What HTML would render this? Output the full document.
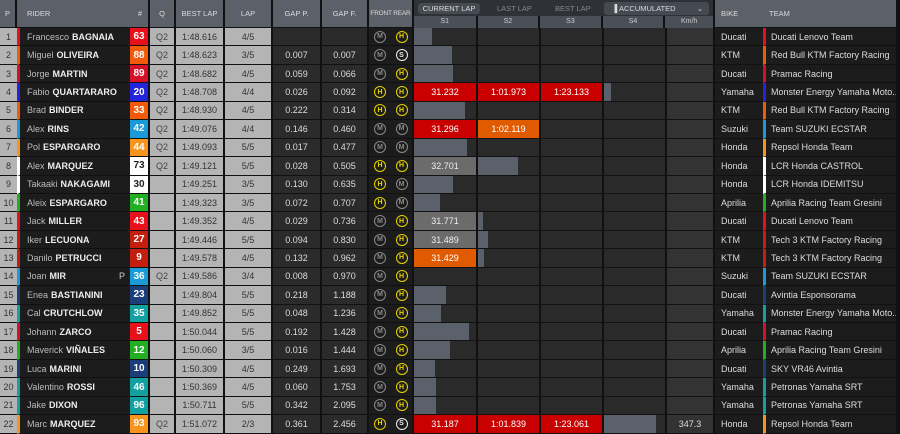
<!DOCTYPE html><html><head><meta charset="utf-8"><style>
*{margin:0;padding:0;box-sizing:border-box}
body{width:900px;height:434px;background:#111;font-family:"Liberation Sans",sans-serif;font-size:9px;overflow:hidden;color:#ddd}
.r{display:flex;height:18.45px}
.r>div{border-right:2px solid #111;border-bottom:1px solid #111;height:100%;display:flex;align-items:center;justify-content:center;position:relative;white-space:nowrap;overflow:hidden}
.p{width:17px;background:#b4b4b4;color:#333;border-right-width:0!important}
.rd{width:113px;background:#1c1c1c;color:#bbb;justify-content:flex-start!important;padding-left:7px;border-right:none!important;border-left:3px solid}
.rd b{color:#eee;margin-left:3px}
.n{width:20px;color:#fff;font-weight:bold;font-size:10px}
.q{width:26px;background:#b4b4b4;color:#444}
.bl{width:49px;background:#b4b4b4;color:#333}
.lp{width:48px;background:#b4b4b4;color:#333}
.gp{width:49px;background:#2b2b2b}
.gf{width:47px;background:#2b2b2b}
.fr{width:22px;background:#1c1c1c;border-right:none!important}
.rr{width:23px;background:#1c1c1c}
.s{background:#2a2a2a;justify-content:flex-start!important}
.s1{width:64px}.s2,.s3,.s4{width:63px}
.kh{width:48px;background:#333}
.bk{width:48px;background:#1c1c1c;justify-content:flex-start!important;padding-left:6px;border-right:none!important}
.tm{width:135px;background:#1c1c1c;justify-content:flex-start!important;padding-left:5px;border-left:3px solid}
.bar{position:absolute;left:0;top:0;bottom:0;background:#5b616b}
.red{background:#c80000!important;color:#fff;justify-content:center!important}
.org{background:#e05a00!important;color:#fff;justify-content:center!important}
.gry{background:#6b6b6b!important;color:#eee;justify-content:center!important}
.c{width:12px;height:12px;border-radius:50%;border:1.5px solid;font-size:7px;font-weight:bold;display:flex;align-items:center;justify-content:center}
.M{color:#8a8a8a;border-color:#8a8a8a}.H{color:#e8d400;border-color:#e8d400}.S{color:#eee;border-color:#eee}
.hd{display:flex;height:28px}
.hd>div{background:#5b6069;border-right:2px solid #111;border-bottom:1px solid #111;font-size:7.5px;color:#ddd;display:flex;align-items:center;justify-content:center;white-space:nowrap}
.sub>div{background:#4b5058;border-right:2px solid #111;text-align:center;line-height:12px}
</style></head><body>
<div class="hd">
<div style="width:17px">P</div>
<div style="width:133px;justify-content:space-between;padding:0 6px 0 10px"><span>RIDER</span><span>#</span></div>
<div style="width:26px">Q</div>
<div style="width:49px">BEST LAP</div>
<div style="width:48px">LAP</div>
<div style="width:49px">GAP P.</div>
<div style="width:47px">GAP F.</div>
<div style="width:45px;font-size:6.5px;letter-spacing:-0.2px">FRONT REAR</div>
<div style="width:301px;display:block;background:#2e3136;border-right:2px solid #111;padding:0">
 <div style="height:16px;position:relative;font-size:7.5px">
  <div style="position:absolute;left:4px;top:3px;width:62px;height:11px;background:#454a52;border-radius:3px;color:#ddd;text-align:center;line-height:11px">CURRENT LAP</div>
  <div style="position:absolute;left:83px;top:3px;color:#888;line-height:11px">LAST LAP</div>
  <div style="position:absolute;left:141px;top:3px;color:#888;line-height:11px">BEST LAP</div>
  <div style="position:absolute;left:190px;top:2px;width:105px;height:13px;background:#454a52;border-radius:3px;color:#ddd;line-height:13px;padding-left:8px">▐ ACCUMULATED<span style="position:absolute;right:6px">⌄</span></div>
 </div>
 <div class="sub" style="height:12px;display:flex;font-size:7px;color:#ccc;background:#111">
  <div style="width:64px">S1</div>
  <div style="width:63px">S2</div>
  <div style="width:63px">S3</div>
  <div style="width:63px">S4</div>
  <div style="width:48px;border-right:none">Km/h</div>
 </div>
</div>
<div style="width:48px;justify-content:flex-start;padding-left:6px;border-right:none">BIKE</div>
<div style="width:135px;justify-content:flex-start;padding-left:6px">TEAM</div>
</div>

<div class="r"><div class="p">1</div><div class="rd" style="border-left-color:#e8101a">Francesco<b>BAGNAIA</b></div><div class="n" style="background:#e8101a">63</div><div class="q">Q2</div><div class="bl">1:48.616</div><div class="lp">4/5</div><div class="gp"></div><div class="gf"></div><div class="fr"><span class="c M">M</span></div><div class="rr"><span class="c H">H</span></div><div class="s s1"><i class="bar" style="width:18px"></i></div><div class="s s2"></div><div class="s s3"></div><div class="s s4"></div><div class="kh"></div><div class="bk">Ducati</div><div class="tm" style="border-left-color:#e8101a">Ducati Lenovo Team</div></div>
<div class="r"><div class="p">2</div><div class="rd" style="border-left-color:#f05a0a">Miguel<b>OLIVEIRA</b></div><div class="n" style="background:#f05a0a">88</div><div class="q">Q2</div><div class="bl">1:48.623</div><div class="lp">3/5</div><div class="gp">0.007</div><div class="gf">0.007</div><div class="fr"><span class="c M">M</span></div><div class="rr"><span class="c S">S</span></div><div class="s s1"><i class="bar" style="width:38px"></i></div><div class="s s2"></div><div class="s s3"></div><div class="s s4"></div><div class="kh"></div><div class="bk">KTM</div><div class="tm" style="border-left-color:#f05a0a">Red Bull KTM Factory Racing</div></div>
<div class="r"><div class="p">3</div><div class="rd" style="border-left-color:#d4102a">Jorge<b>MARTIN</b></div><div class="n" style="background:#d4102a">89</div><div class="q">Q2</div><div class="bl">1:48.682</div><div class="lp">4/5</div><div class="gp">0.059</div><div class="gf">0.066</div><div class="fr"><span class="c M">M</span></div><div class="rr"><span class="c H">H</span></div><div class="s s1"><i class="bar" style="width:39px"></i></div><div class="s s2"></div><div class="s s3"></div><div class="s s4"></div><div class="kh"></div><div class="bk">Ducati</div><div class="tm" style="border-left-color:#d4102a">Pramac Racing</div></div>
<div class="r"><div class="p">4</div><div class="rd" style="border-left-color:#2424d8">Fabio<b>QUARTARARO</b></div><div class="n" style="background:#2424d8">20</div><div class="q">Q2</div><div class="bl">1:48.708</div><div class="lp">4/4</div><div class="gp">0.026</div><div class="gf">0.092</div><div class="fr"><span class="c H">H</span></div><div class="rr"><span class="c H">H</span></div><div class="s s1 red">31.232</div><div class="s s2 red">1:01.973</div><div class="s s3 red">1:23.133</div><div class="s s4"><i class="bar" style="width:7px"></i></div><div class="kh"></div><div class="bk">Yamaha</div><div class="tm" style="border-left-color:#2424d8">Monster Energy Yamaha Moto...</div></div>
<div class="r"><div class="p">5</div><div class="rd" style="border-left-color:#f05a0a">Brad<b>BINDER</b></div><div class="n" style="background:#f05a0a">33</div><div class="q">Q2</div><div class="bl">1:48.930</div><div class="lp">4/5</div><div class="gp">0.222</div><div class="gf">0.314</div><div class="fr"><span class="c H">H</span></div><div class="rr"><span class="c H">H</span></div><div class="s s1"><i class="bar" style="width:51px"></i></div><div class="s s2"></div><div class="s s3"></div><div class="s s4"></div><div class="kh"></div><div class="bk">KTM</div><div class="tm" style="border-left-color:#f05a0a">Red Bull KTM Factory Racing</div></div>
<div class="r"><div class="p">6</div><div class="rd" style="border-left-color:#1a9ad6">Alex<b>RINS</b></div><div class="n" style="background:#1a9ad6">42</div><div class="q">Q2</div><div class="bl">1:49.076</div><div class="lp">4/4</div><div class="gp">0.146</div><div class="gf">0.460</div><div class="fr"><span class="c M">M</span></div><div class="rr"><span class="c M">M</span></div><div class="s s1 red">31.296</div><div class="s s2 org">1:02.119</div><div class="s s3"></div><div class="s s4"></div><div class="kh"></div><div class="bk">Suzuki</div><div class="tm" style="border-left-color:#1a9ad6">Team SUZUKI ECSTAR</div></div>
<div class="r"><div class="p">7</div><div class="rd" style="border-left-color:#f7941d">Pol<b>ESPARGARO</b></div><div class="n" style="background:#f7941d">44</div><div class="q">Q2</div><div class="bl">1:49.093</div><div class="lp">5/5</div><div class="gp">0.017</div><div class="gf">0.477</div><div class="fr"><span class="c M">M</span></div><div class="rr"><span class="c M">M</span></div><div class="s s1"><i class="bar" style="width:53px"></i></div><div class="s s2"></div><div class="s s3"></div><div class="s s4"></div><div class="kh"></div><div class="bk">Honda</div><div class="tm" style="border-left-color:#f7941d">Repsol Honda Team</div></div>
<div class="r"><div class="p">8</div><div class="rd" style="border-left-color:#fff">Alex<b>MARQUEZ</b></div><div class="n" style="background:#fff;color:#222">73</div><div class="q">Q2</div><div class="bl">1:49.121</div><div class="lp">5/5</div><div class="gp">0.028</div><div class="gf">0.505</div><div class="fr"><span class="c H">H</span></div><div class="rr"><span class="c H">H</span></div><div class="s s1 gry">32.701</div><div class="s s2"><i class="bar" style="width:40px"></i></div><div class="s s3"></div><div class="s s4"></div><div class="kh"></div><div class="bk">Honda</div><div class="tm" style="border-left-color:#fff">LCR Honda CASTROL</div></div>
<div class="r"><div class="p">9</div><div class="rd" style="border-left-color:#fff">Takaaki<b>NAKAGAMI</b></div><div class="n" style="background:#fff;color:#222">30</div><div class="q"></div><div class="bl">1:49.251</div><div class="lp">3/5</div><div class="gp">0.130</div><div class="gf">0.635</div><div class="fr"><span class="c H">H</span></div><div class="rr"><span class="c M">M</span></div><div class="s s1"><i class="bar" style="width:39px"></i></div><div class="s s2"></div><div class="s s3"></div><div class="s s4"></div><div class="kh"></div><div class="bk">Honda</div><div class="tm" style="border-left-color:#fff">LCR Honda IDEMITSU</div></div>
<div class="r"><div class="p">10</div><div class="rd" style="border-left-color:#22b022">Aleix<b>ESPARGARO</b></div><div class="n" style="background:#22b022">41</div><div class="q"></div><div class="bl">1:49.323</div><div class="lp">3/5</div><div class="gp">0.072</div><div class="gf">0.707</div><div class="fr"><span class="c H">H</span></div><div class="rr"><span class="c M">M</span></div><div class="s s1"><i class="bar" style="width:26px"></i></div><div class="s s2"></div><div class="s s3"></div><div class="s s4"></div><div class="kh"></div><div class="bk">Aprilia</div><div class="tm" style="border-left-color:#22b022">Aprilia Racing Team Gresini</div></div>
<div class="r"><div class="p">11</div><div class="rd" style="border-left-color:#e8101a">Jack<b>MILLER</b></div><div class="n" style="background:#e8101a">43</div><div class="q"></div><div class="bl">1:49.352</div><div class="lp">4/5</div><div class="gp">0.029</div><div class="gf">0.736</div><div class="fr"><span class="c M">M</span></div><div class="rr"><span class="c H">H</span></div><div class="s s1 gry">31.771</div><div class="s s2"><i class="bar" style="width:5px"></i></div><div class="s s3"></div><div class="s s4"></div><div class="kh"></div><div class="bk">Ducati</div><div class="tm" style="border-left-color:#e8101a">Ducati Lenovo Team</div></div>
<div class="r"><div class="p">12</div><div class="rd" style="border-left-color:#c41e0e">Iker<b>LECUONA</b></div><div class="n" style="background:#c41e0e">27</div><div class="q"></div><div class="bl">1:49.446</div><div class="lp">5/5</div><div class="gp">0.094</div><div class="gf">0.830</div><div class="fr"><span class="c M">M</span></div><div class="rr"><span class="c H">H</span></div><div class="s s1 gry">31.489</div><div class="s s2"><i class="bar" style="width:10px"></i></div><div class="s s3"></div><div class="s s4"></div><div class="kh"></div><div class="bk">KTM</div><div class="tm" style="border-left-color:#c41e0e">Tech 3 KTM Factory Racing</div></div>
<div class="r"><div class="p">13</div><div class="rd" style="border-left-color:#c41e0e">Danilo<b>PETRUCCI</b></div><div class="n" style="background:#c41e0e">9</div><div class="q"></div><div class="bl">1:49.578</div><div class="lp">4/5</div><div class="gp">0.132</div><div class="gf">0.962</div><div class="fr"><span class="c M">M</span></div><div class="rr"><span class="c H">H</span></div><div class="s s1 org">31.429</div><div class="s s2"><i class="bar" style="width:6px"></i></div><div class="s s3"></div><div class="s s4"></div><div class="kh"></div><div class="bk">KTM</div><div class="tm" style="border-left-color:#c41e0e">Tech 3 KTM Factory Racing</div></div>
<div class="r"><div class="p">14</div><div class="rd" style="border-left-color:#1a9ad6">Joan<b>MIR</b><span style="position:absolute;right:5px;color:#ccc">P</span></div><div class="n" style="background:#1a9ad6">36</div><div class="q">Q2</div><div class="bl">1:49.586</div><div class="lp">3/4</div><div class="gp">0.008</div><div class="gf">0.970</div><div class="fr"><span class="c M">M</span></div><div class="rr"><span class="c H">H</span></div><div class="s s1"></div><div class="s s2"></div><div class="s s3"></div><div class="s s4"></div><div class="kh"></div><div class="bk">Suzuki</div><div class="tm" style="border-left-color:#1a9ad6">Team SUZUKI ECSTAR</div></div>
<div class="r"><div class="p">15</div><div class="rd" style="border-left-color:#1a3e7a">Enea<b>BASTIANINI</b></div><div class="n" style="background:#1a3e7a">23</div><div class="q"></div><div class="bl">1:49.804</div><div class="lp">5/5</div><div class="gp">0.218</div><div class="gf">1.188</div><div class="fr"><span class="c M">M</span></div><div class="rr"><span class="c H">H</span></div><div class="s s1"><i class="bar" style="width:32px"></i></div><div class="s s2"></div><div class="s s3"></div><div class="s s4"></div><div class="kh"></div><div class="bk">Ducati</div><div class="tm" style="border-left-color:#1a3e7a">Avintia Esponsorama</div></div>
<div class="r"><div class="p">16</div><div class="rd" style="border-left-color:#12a0a0">Cal<b>CRUTCHLOW</b></div><div class="n" style="background:#12a0a0">35</div><div class="q"></div><div class="bl">1:49.852</div><div class="lp">5/5</div><div class="gp">0.048</div><div class="gf">1.236</div><div class="fr"><span class="c M">M</span></div><div class="rr"><span class="c H">H</span></div><div class="s s1"><i class="bar" style="width:27px"></i></div><div class="s s2"></div><div class="s s3"></div><div class="s s4"></div><div class="kh"></div><div class="bk">Yamaha</div><div class="tm" style="border-left-color:#12a0a0">Monster Energy Yamaha Moto...</div></div>
<div class="r"><div class="p">17</div><div class="rd" style="border-left-color:#d4102a">Johann<b>ZARCO</b></div><div class="n" style="background:#e8101a">5</div><div class="q"></div><div class="bl">1:50.044</div><div class="lp">5/5</div><div class="gp">0.192</div><div class="gf">1.428</div><div class="fr"><span class="c M">M</span></div><div class="rr"><span class="c H">H</span></div><div class="s s1"><i class="bar" style="width:55px"></i></div><div class="s s2"></div><div class="s s3"></div><div class="s s4"></div><div class="kh"></div><div class="bk">Ducati</div><div class="tm" style="border-left-color:#d4102a">Pramac Racing</div></div>
<div class="r"><div class="p">18</div><div class="rd" style="border-left-color:#22b022">Maverick<b>VIÑALES</b></div><div class="n" style="background:#22b022">12</div><div class="q"></div><div class="bl">1:50.060</div><div class="lp">3/5</div><div class="gp">0.016</div><div class="gf">1.444</div><div class="fr"><span class="c M">M</span></div><div class="rr"><span class="c H">H</span></div><div class="s s1"><i class="bar" style="width:36px"></i></div><div class="s s2"></div><div class="s s3"></div><div class="s s4"></div><div class="kh"></div><div class="bk">Aprilia</div><div class="tm" style="border-left-color:#22b022">Aprilia Racing Team Gresini</div></div>
<div class="r"><div class="p">19</div><div class="rd" style="border-left-color:#1a3e7a">Luca<b>MARINI</b></div><div class="n" style="background:#1a3e7a">10</div><div class="q"></div><div class="bl">1:50.309</div><div class="lp">4/5</div><div class="gp">0.249</div><div class="gf">1.693</div><div class="fr"><span class="c M">M</span></div><div class="rr"><span class="c H">H</span></div><div class="s s1"><i class="bar" style="width:21px"></i></div><div class="s s2"></div><div class="s s3"></div><div class="s s4"></div><div class="kh"></div><div class="bk">Ducati</div><div class="tm" style="border-left-color:#1a3e7a">SKY VR46 Avintia</div></div>
<div class="r"><div class="p">20</div><div class="rd" style="border-left-color:#12a0a0">Valentino<b>ROSSI</b></div><div class="n" style="background:#12a0a0">46</div><div class="q"></div><div class="bl">1:50.369</div><div class="lp">4/5</div><div class="gp">0.060</div><div class="gf">1.753</div><div class="fr"><span class="c M">M</span></div><div class="rr"><span class="c H">H</span></div><div class="s s1"><i class="bar" style="width:22px"></i></div><div class="s s2"></div><div class="s s3"></div><div class="s s4"></div><div class="kh"></div><div class="bk">Yamaha</div><div class="tm" style="border-left-color:#12a0a0">Petronas Yamaha SRT</div></div>
<div class="r"><div class="p">21</div><div class="rd" style="border-left-color:#12a0a0">Jake<b>DIXON</b></div><div class="n" style="background:#12a0a0">96</div><div class="q"></div><div class="bl">1:50.711</div><div class="lp">5/5</div><div class="gp">0.342</div><div class="gf">2.095</div><div class="fr"><span class="c M">M</span></div><div class="rr"><span class="c H">H</span></div><div class="s s1"><i class="bar" style="width:22px"></i></div><div class="s s2"></div><div class="s s3"></div><div class="s s4"></div><div class="kh"></div><div class="bk">Yamaha</div><div class="tm" style="border-left-color:#12a0a0">Petronas Yamaha SRT</div></div>
<div class="r"><div class="p">22</div><div class="rd" style="border-left-color:#f7941d">Marc<b>MARQUEZ</b></div><div class="n" style="background:#f7941d">93</div><div class="q">Q2</div><div class="bl">1:51.072</div><div class="lp">2/3</div><div class="gp">0.361</div><div class="gf">2.456</div><div class="fr"><span class="c H">H</span></div><div class="rr"><span class="c S">S</span></div><div class="s s1 red">31.187</div><div class="s s2 red">1:01.839</div><div class="s s3 red">1:23.061</div><div class="s s4"><i class="bar" style="width:52px"></i></div><div class="kh">347.3</div><div class="bk">Honda</div><div class="tm" style="border-left-color:#f7941d">Repsol Honda Team</div></div>
</body></html>
